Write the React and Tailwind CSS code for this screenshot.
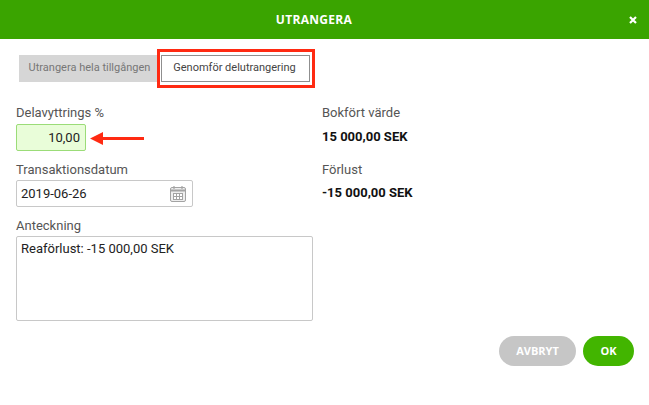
export default function App() {
  return (
    <div className="relative flex h-[405px] w-[649px] flex-col bg-white font-['Roboto',sans-serif] text-[#111]">
      <header className="relative flex h-[39px] shrink-0 items-center justify-center bg-[#3aa400] pr-[21px]">
        <h1 className="font-['Open_Sans',sans-serif] text-[12px] font-bold tracking-[0.3px] text-white">UTRANGERA</h1>
        <svg className="absolute left-[629px] top-[16px]" width="8" height="8" viewBox="0 0 8 8">
          <path d="M1 1L7 7M7 1L1 7" stroke="#fff" strokeWidth="2.2" />
        </svg>
      </header>

      <div className="flex pl-[19px] pt-[16px]">
        <button className="flex h-[27px] w-[139px] items-center justify-center bg-[#d6d6d6] pl-[2px] text-[11px] text-[#777]">
          Utrangera hela tillgången
        </button>
        <button className="ml-[3px] flex h-[27px] w-[149px] items-center justify-center border border-[#8f8f8f] bg-white pr-[2px] text-[11px] text-[#444]">
          Genomför delutrangering
        </button>
      </div>

      <div className="flex pl-[16px] pt-[22px]">
        <div className="flex w-[306px] flex-col">
          <label className="text-[13px] leading-[18px] text-[#555]">Delavyttrings %</label>
          <div className="mt-[2px] flex h-[27px] w-[70px] items-center justify-end rounded-[2px] border border-[#9bdc78] bg-[#e9fdd9] pr-[5px] text-[13px] text-[#222]">
            10,00
          </div>
          <label className="mt-[10px] text-[13px] leading-[18px] text-[#555]">Transaktionsdatum</label>
          <div className="mt-[1px] flex h-[27px] w-[177px] items-center justify-between rounded-[2px] border border-[#c8c8c8] pl-[4px] pr-[6px] text-[13px] text-[#222]">
            <span>2019-06-26</span>
            <svg width="16" height="16" viewBox="0 0 16 16" fill="none" stroke="#a3a3a3">
              <rect x="0.5" y="1.5" width="15" height="14" rx="1.5" fill="#eee" />
              <path d="M0.5 4.5H15.5" strokeWidth="2" />
              <path d="M4 0V3M12 0V3" strokeWidth="1.2" />
              <rect x="3.5" y="7.5" width="9" height="6" fill="#fff" />
              <path d="M6.5 7.5V13.5M9.5 7.5V13.5M3.5 10.5H12.5" />
            </svg>
          </div>
          <label className="mt-[10px] text-[13px] leading-[18px] text-[#555]">Anteckning</label>
          <div className="mt-[1px] h-[85px] w-[297px] rounded-[2px] border border-[#c8c8c8] pl-[4px] pt-[3px] text-[13px] leading-[18px] text-[#222]">
            Reaförlust: -15 000,00 SEK
          </div>
        </div>

        <div className="flex flex-col">
          <span className="text-[13px] leading-[18px] text-[#555]">Bokfört värde</span>
          <span className="mt-[6px] text-[13px] font-bold leading-[18px] text-[#111]">15 000,00 SEK</span>
          <span className="mt-[15px] text-[13px] leading-[18px] text-[#555]">Förlust</span>
          <span className="mt-[5px] text-[13px] font-bold leading-[18px] text-[#111]">-15 000,00 SEK</span>
        </div>
      </div>

      <div className="flex justify-end gap-[7px] pr-[15px] pt-[15px]">
        <button className="h-[30px] w-[77px] rounded-full bg-[#c6c6c6] font-['Open_Sans',sans-serif] text-[11px] font-bold text-white">
          AVBRYT
        </button>
        <button className="h-[30px] w-[51px] rounded-full bg-[#42b500] font-['Open_Sans',sans-serif] text-[11px] font-bold text-white">
          OK
        </button>
      </div>

      {/* red annotations on top of the form */}
      <div className="absolute left-[157px] top-[49px] h-[39px] w-[158px] border-[3px] border-[#ff2a12]" />
      <svg className="absolute left-[88px] top-[130px]" width="58" height="16" viewBox="0 0 58 16">
        <path d="M2 8.5L15 2V7H56V10H15V15Z" fill="#ff2a12" />
      </svg>
    </div>
  );
}
